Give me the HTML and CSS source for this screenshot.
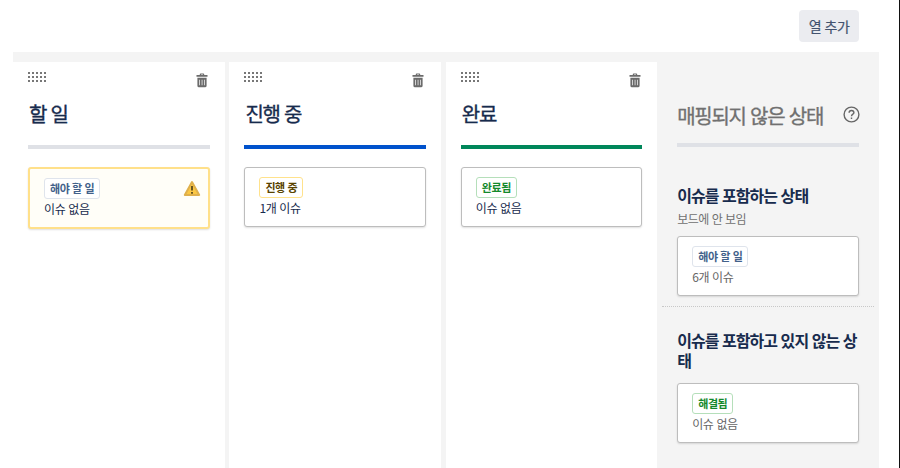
FILE: index.html
```html
<!DOCTYPE html>
<html lang="ko">
<head>
<meta charset="utf-8">
<title>열 및 상태</title>
<link rel="stylesheet" href="styles.css">
</head>
<body>
<svg class="defs" aria-hidden="true">
  <symbol id="trash" viewBox="0 0 12 15">
    <path d="M3.8 2V1.2Q3.8.4 4.6.4h2.8q.8 0 .8.8V2h3.3v1.8H.5V2zM5 2h2v-.6H5z"/>
    <path fill-rule="evenodd" d="M1.4 4.7h9.2v8q0 1.6-1.6 1.6H3q-1.6 0-1.6-1.6zM3.3 6.7v5.5h.7V6.7zM5.7 6.7v5.5h.7V6.7zM8 6.7v5.5h.7V6.7z"/>
  </symbol>
  <symbol id="grip" viewBox="0 0 19 11">
    <path d="M0 1h19M0 5h19M0 9h19" stroke="#777" stroke-width="2" stroke-dasharray="2 2"/>
  </symbol>
</svg>
<header class="toolbar"><button class="add" type="button">열 추가</button></header>
<main class="board">
  <section class="column">
    <div class="tools"><svg class="grip"><use href="#grip"/></svg><svg class="trash"><use href="#trash"/></svg></div>
    <h2 class="title">할 일</h2>
    <div class="bar"></div>
    <article class="card warn">
      <div><span class="tag blue">해야 할 일</span><p class="count">이슈 없음</p></div>
      <svg class="alert" viewBox="0 0 18 17"><path d="M9 2.1 16.2 15H1.8z" fill="#fbc744" stroke="#dfb04c" stroke-width="2" stroke-linejoin="round"/><path d="M9 6v4.5M9 12v1.8" stroke="#59491f" stroke-width="1.8"/></svg>
    </article>
  </section>
  <section class="column">
    <div class="tools"><svg class="grip"><use href="#grip"/></svg><svg class="trash"><use href="#trash"/></svg></div>
    <h2 class="title">진행 중</h2>
    <div class="bar progress"></div>
    <article class="card"><div><span class="tag yellow">진행 중</span><p class="count">1개 이슈</p></div></article>
  </section>
  <section class="column">
    <div class="tools"><svg class="grip"><use href="#grip"/></svg><svg class="trash"><use href="#trash"/></svg></div>
    <h2 class="title">완료</h2>
    <div class="bar done"></div>
    <article class="card"><div><span class="tag green">완료됨</span><p class="count">이슈 없음</p></div></article>
  </section>
  <section class="column unmapped">
    <div class="head">
      <h2 class="title">매핑되지 않은 상태</h2>
      <svg class="help" viewBox="0 0 17 17"><circle cx="8.5" cy="8.5" r="7.4"/><path d="M6.1 6.8Q6.1 4.5 8.5 4.5T10.9 6.7C10.9 8.2 8.5 8.2 8.5 10.2M8.5 11.4v1.6"/></svg>
    </div>
    <div class="bar"></div>
    <div class="group">
      <h3>이슈를 포함하는 상태</h3>
      <p class="sub">보드에 안 보임</p>
      <article class="card"><div><span class="tag blue">해야 할 일</span><p class="count">6개 이슈</p></div></article>
    </div>
    <div class="group second">
      <h3>이슈를 포함하고 있지 않는 상태</h3>
      <article class="card"><div><span class="tag green">해결됨</span><p class="count">이슈 없음</p></div></article>
    </div>
  </section>
</main>
</body>
</html>
```
FILE: styles.css
```css
* { box-sizing: border-box; }
html { background: #fff; }
body {
  height: 468px;
  margin: 0;
  overflow: hidden;
  border-right: 1px solid #111;
  font-family: "Noto Sans CJK KR", sans-serif;
  color: #172b4d;
}
h2, h3, p { margin: 0; }
svg { display: block; }
.defs { position: absolute; width: 0; height: 0; }
.toolbar {
  display: flex;
  justify-content: flex-end;
  height: 52px;
  padding: 10px 40px 0 0;
}
.add {
  width: 60px;
  height: 32px;
  padding: 0;
  border: 0;
  border-radius: 4px;
  background: #ebecf0;
  color: #42526e;
  font: 14px/30px "Noto Sans CJK KR", sans-serif;
  letter-spacing: -0.5px;
  -webkit-text-stroke: 0.2px;
}
.board {
  display: grid;
  grid-template-columns: repeat(4, 211.5px);
  column-gap: 4.9px;
  width: 866px;
  height: 416px;
  margin-left: 13px;
  padding-top: 10px;
  background: #f4f4f4;
}
.column { padding: 0 15px; background: #fff; }
.tools { display: flex; justify-content: space-between; height: 36px; padding-top: 10px; }
.grip { width: 19px; height: 11px; }
.trash { width: 12px; height: 15px; margin: 1px 1.5px 0 0; fill: #6b6b6b; }
.title {
  font-size: 20px;
  font-weight: 400;
  line-height: 32px;
  letter-spacing: -1.25px;
  -webkit-text-stroke: 0.35px;
}
.column .tools + .title { height: 47px; padding-left: 1px; }
.bar { height: 4px; background: #dfe1e6; }
.progress { background: #0052cc; }
.done { background: #00875a; }
.card {
  display: flex;
  justify-content: space-between;
  height: 60px;
  padding: 9px 14px;
  border: 1px solid #bdbdbd;
  border-radius: 3px;
  background: #fff;
  box-shadow: 0 1px 2px rgba(0, 0, 0, .13);
}
.bar + .card { margin-top: 18px; }
.warn { height: 62px; padding: 9px 7px 9px 14px; border: 2px solid #ffe08a; background: #fffef8; }
.alert { width: 18px; height: 17px; margin-top: 2px; }
.tag {
  display: block;
  width: max-content;
  height: 21px;
  padding: 0 5px;
  border: 1px solid #dfe4ec;
  border-radius: 3px;
  background: #fff;
  font-size: 11px;
  font-weight: 700;
  line-height: 18px;
  letter-spacing: -0.4px;
}
.blue { color: #42618a; }
.yellow { border-color: #ffe28c; color: #594300; }
.green { border-color: #b5dfba; color: #14892c; }
.count { font-size: 12px; line-height: 20px; letter-spacing: -0.4px; }
.unmapped { background: none; }
.head { display: flex; justify-content: space-between; height: 81px; padding-top: 38px; }
.head .title { color: #707070; white-space: nowrap; }
.help { width: 17px; height: 17px; margin: 6px -1px 0 0; fill: none; stroke: #666; stroke-width: 1.4; }
.group { padding-top: 38px; }
h3 { margin-right: -6px; font-size: 16px; line-height: 20px; letter-spacing: -0.95px; word-break: break-all; }
.sub { height: 31px; padding-top: 4px; color: #707070; font-size: 12px; line-height: 20px; letter-spacing: -0.5px; }
.unmapped .count { color: #666; }
.second { margin: 10px -15px 0; padding: 23px 15px 0; border-top: 1px dotted #c8c8c8; }
.second h3 { margin-bottom: 13px; }
```
